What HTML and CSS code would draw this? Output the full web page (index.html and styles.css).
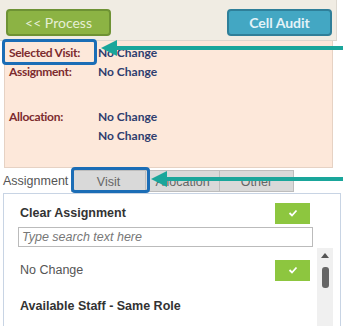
FILE: index.html
```html
<!DOCTYPE html>
<html>
<head>
  <title>Visit Assignment</title>
  <link rel="stylesheet" href="styles.css">
</head>
<body>
  <div class="page">
    <div class="toolbar">
      <button class="btn btn-process">&lt;&lt; Process</button>
      <button class="btn btn-audit">Cell Audit</button>
    </div>

    <div class="summary">
      <div class="row"><span class="label">Selected Visit:</span><span class="value">No Change</span></div>
      <div class="row"><span class="label">Assignment:</span><span class="value">No Change</span></div>
      <div class="row gap"><span class="label">Allocation:</span><span class="value">No Change</span></div>
      <div class="row"><span class="label"></span><span class="value">No Change</span></div>
    </div>

    <div class="tabs">
      <span class="tab-title">Assignment</span>
      <span class="tab">Visit</span>
      <span class="tab">Allocation</span>
      <span class="tab">Other</span>
    </div>

    <div class="panel">
      <div class="item">
        <span class="item-title">Clear Assignment</span>
        <span class="check"><svg width="10" height="8" viewBox="0 0 10 8"><path d="M1.5 4 L4 6.5 L8.5 1.5" fill="none" stroke="#fff" stroke-width="1.8"/></svg></span>
      </div>
      <input class="search" type="text" placeholder="Type search text here">
      <div class="list">
        <div class="list-body">
          <div class="item">
            <span class="item-text">No Change</span>
            <span class="check"><svg width="10" height="8" viewBox="0 0 10 8"><path d="M1.5 4 L4 6.5 L8.5 1.5" fill="none" stroke="#fff" stroke-width="1.8"/></svg></span>
          </div>
          <div class="group">Available Staff - Same Role</div>
        </div>
        <div class="scrollbar">
          <span class="scroll-up"></span>
          <span class="scroll-thumb"></span>
        </div>
      </div>
    </div>

    <!-- callouts -->
    <div class="mark mark-visit"></div>
    <div class="mark mark-tab"></div>
    <svg class="arrow arrow-1" width="245" height="20" viewBox="0 0 245 20">
      <line x1="12" y1="9" x2="245" y2="9" stroke="#1aa69b" stroke-width="4"/>
      <polygon points="1,9 17,1 17,17" fill="#1aa69b"/>
    </svg>
    <svg class="arrow arrow-2" width="195" height="20" viewBox="0 0 195 20">
      <line x1="12" y1="9" x2="195" y2="9" stroke="#1aa69b" stroke-width="4"/>
      <polygon points="1,9 17,1 17,17" fill="#1aa69b"/>
    </svg>
  </div>
</body>
</html>
```

FILE: styles.css
```css
body {
  margin: 0;
  background: #fff;
  font-family: "Liberation Sans", Arial, sans-serif;
}

.page {
  position: relative;
  width: 343px;
  height: 326px;
  overflow: hidden;
}

.toolbar {
  display: flex;
  justify-content: space-between;
  width: 337px;
  height: 41px;
  padding: 9px 4px 0 6px;
  box-sizing: border-box;
  background: #f0ece3;
  border-right: 1px solid #ddd8cf;
  border-bottom: 1px solid #ddd8cf;
}

.btn {
  width: 105px;
  height: 27px;
  border-radius: 4px;
  font-family: Lato, "Open Sans", sans-serif;
  font-size: 14px;
  cursor: pointer;
}

.btn-process {
  background: #8cb344;
  border: 2px solid #6e9234;
  color: #e6efd5;
}

.btn-audit {
  background: #43a7c3;
  border: 2px solid #2f7f99;
  color: #e3f3f8;
  font-weight: bold;
}

.summary {
  width: 329px;
  height: 127px;
  margin-left: 4px;
  padding-top: 2px;
  box-sizing: border-box;
  background: #fde8da;
  border: 1px solid #e6d2c4;
  border-top: none;
  font-family: Lato, "Open Sans", sans-serif;
  font-weight: bold;
  font-size: 12px;
}

.row {
  display: flex;
  height: 19px;
  line-height: 19px;
}

.row.gap {
  margin-top: 26px;
}

.label {
  width: 89px;
  padding-left: 4px;
  color: #7c2b2e;
  letter-spacing: -0.3px;
}

.value {
  color: #2f3d6e;
}

.tabs {
  display: flex;
  align-items: flex-end;
  height: 24px;
}

.tab-title {
  width: 71px;
  padding-left: 3px;
  box-sizing: border-box;
  font-size: 12.5px;
  color: #555;
  line-height: 22px;
}

.tab {
  width: 75px;
  height: 22px;
  line-height: 22px;
  text-align: center;
  font-size: 12.5px;
  color: #666;
  background: #d9d9d9;
  border: 1px solid #bdbdbd;
  box-sizing: border-box;
}

.tab + .tab {
  margin-left: -1px;
}

.panel {
  width: 338px;
  height: 140px;
  margin-left: 3px;
  margin-top: 1px;
  padding: 8px 0 0 14px;
  box-sizing: border-box;
  border: 1px solid #c8d4e4;
  border-bottom: none;
}

.item {
  display: flex;
  justify-content: space-between;
  align-items: center;
  width: 292px;
  height: 22px;
}

.item-title {
  padding-left: 2px;
  font-size: 12.5px;
  font-weight: bold;
  color: #333;
}

.item-text {
  padding-left: 2px;
  font-size: 12.5px;
  color: #555;
}

.check {
  display: flex;
  align-items: center;
  justify-content: center;
  width: 35px;
  height: 21px;
  background: #8dc63f;
}

.search {
  display: block;
  width: 295px;
  height: 20px;
  margin-top: 3px;
  padding: 0 3px;
  box-sizing: border-box;
  border: 1px solid #bbb;
  font-family: "Liberation Sans", Arial, sans-serif;
  font-size: 12.5px;
}

.search::placeholder {
  color: #777;
  font-style: italic;
}

.list {
  display: flex;
  margin-top: 1px;
}

.list-body {
  width: 295px;
  padding-top: 11px;
}

.group {
  margin-top: 18px;
  padding-left: 2px;
  font-size: 12.5px;
  font-weight: bold;
  color: #333;
}

.scrollbar {
  position: relative;
  width: 16px;
  height: 80px;
  margin-left: 4px;
  background: #f0f0f0;
}

.scroll-up {
  position: absolute;
  left: 4px;
  top: 5px;
  border-left: 4px solid transparent;
  border-right: 4px solid transparent;
  border-bottom: 5px solid #555;
}

.scroll-thumb {
  position: absolute;
  left: 5px;
  top: 19px;
  width: 7px;
  height: 21px;
  border-radius: 3px;
  background: #666;
}

.mark {
  position: absolute;
  border: 3px solid #1b6db6;
  border-radius: 4px;
  box-sizing: border-box;
}

.mark-visit {
  left: 2px;
  top: 39px;
  width: 95px;
  height: 26px;
}

.mark-tab {
  left: 71px;
  top: 167px;
  width: 79px;
  height: 26px;
}

.arrow {
  position: absolute;
}

.arrow-1 {
  left: 100px;
  top: 39px;
}

.arrow-2 {
  left: 150px;
  top: 170px;
}
```
